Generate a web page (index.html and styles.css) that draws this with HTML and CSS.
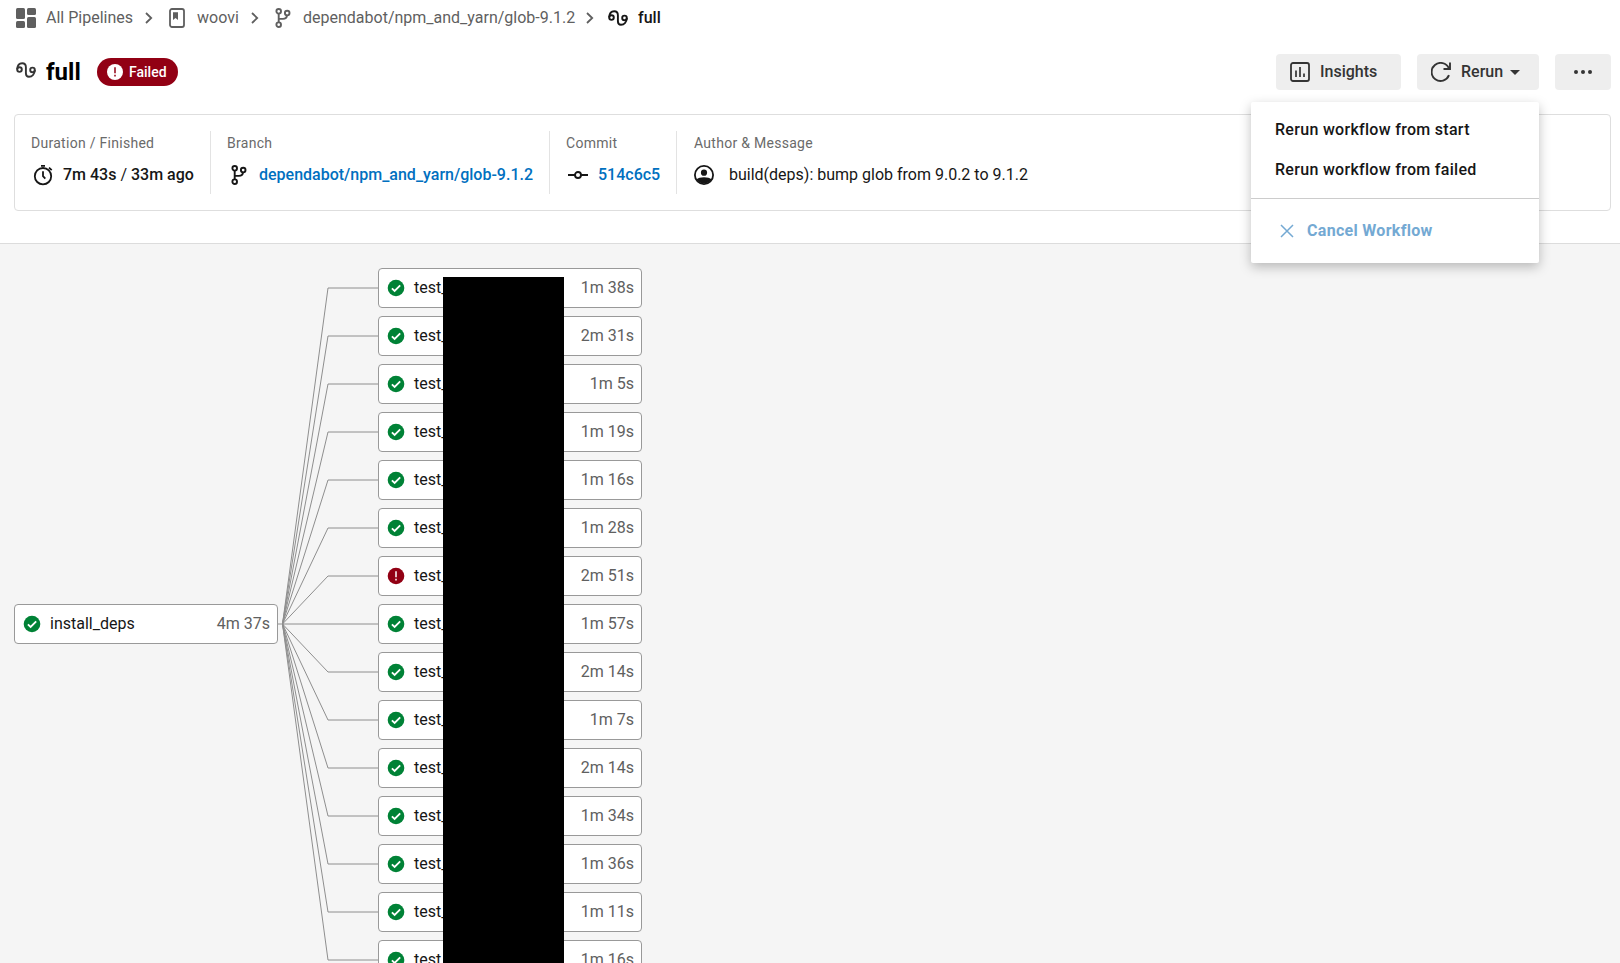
FILE: index.html
```html
<!DOCTYPE html>
<html lang="en">
<head>
<meta charset="utf-8">
<title>full - Pipelines</title>
<link rel="stylesheet" href="styles.css">
</head>
<body>
<svg class="defs" aria-hidden="true">
  <defs>
    <symbol id="chevron" viewBox="0 0 8 12"><path d="M1 1 6.2 6 1 11" fill="none" stroke="currentColor" stroke-width="1.8"/></symbol>
    <symbol id="branch" viewBox="0 0 16 20"><g fill="none" stroke="currentColor" stroke-width="1.9"><circle cx="3.7" cy="3.3" r="2.3"/><circle cx="12.2" cy="5.1" r="2.3"/><circle cx="3.7" cy="16.7" r="2.3"/><path d="M3.7 5.6V14.4M12 7.4Q11.6 10.9 8 10.9H3.7"/></g></symbol>
    <symbol id="workflow" viewBox="0 0 20 16"><g fill="none" stroke="currentColor" stroke-width="1.9"><circle cx="3.5" cy="7.6" r="2.3"/><circle cx="16.5" cy="7.9" r="2.3"/><path d="M1.2 7.4C1.4 3.6 3.4 1.3 6.2 1.3C8.6 1.3 9.9 2.8 9.9 5.2V11.2C9.9 13.4 11 14.7 13 14.7C16.3 14.7 18.6 12 18.8 8"/></g></symbol>
    <symbol id="ok" viewBox="0 0 18 18"><circle cx="9" cy="9" r="8.3" fill="#008236"/><path d="M4.9 9.3 7.6 12 13.2 6.3" fill="none" stroke="#fff" stroke-width="1.8"/></symbol>
    <symbol id="bad" viewBox="0 0 18 18"><circle cx="9" cy="9" r="8.3" fill="#920014"/><path d="M9 4.3V10.2M9 11.8V13.5" fill="none" stroke="#fff" stroke-width="1.5"/></symbol>
  </defs>
</svg>

<nav class="crumbs">
  <a class="crumb crumb-all">
    <svg class="i20" viewBox="0 0 20 20"><g fill="currentColor"><rect width="9" height="11" rx="1.5"/><rect x="11" width="9" height="7" rx="1.5"/><rect y="13" width="9" height="7" rx="1.5"/><rect x="11" y="9" width="9" height="11" rx="1.5"/></g></svg>
    <span>All Pipelines</span>
  </a>
  <svg class="chev"><use href="#chevron"/></svg>
  <a class="crumb crumb-project">
    <svg class="book" viewBox="0 0 16 20"><rect x="1" y="1" width="14" height="18" rx="2" fill="none" stroke="currentColor" stroke-width="1.8"/><path d="M4 4.2H9V12L6.5 10 4 12Z" fill="currentColor"/></svg>
    <span>woovi</span>
  </a>
  <svg class="chev"><use href="#chevron"/></svg>
  <a class="crumb crumb-branch">
    <svg class="branch"><use href="#branch"/></svg>
    <span>dependabot/npm_and_yarn/glob-9.1.2</span>
  </a>
  <svg class="chev"><use href="#chevron"/></svg>
  <span class="crumb crumb-current">
    <svg class="flow"><use href="#workflow"/></svg>
    <span>full</span>
  </span>
</nav>

<header class="head">
  <svg class="flow"><use href="#workflow"/></svg>
  <h1>full</h1>
  <span class="badge">
    <svg viewBox="0 0 16 16"><circle cx="8" cy="8" r="8" fill="#fff"/><path d="M8 3.3V9.2M8 10.8V12.5" stroke="#920014" stroke-width="1.5"/></svg>
    <span>Failed</span>
  </span>
  <div class="actions">
    <button class="btn btn-insights">
      <svg class="i20" viewBox="0 0 20 20"><rect x="1" y="1" width="18" height="18" rx="2" fill="none" stroke="currentColor" stroke-width="1.8"/><path d="M6 8.5V15M10 5V15M14 11.5V15" fill="none" stroke="currentColor" stroke-width="1.7"/></svg>
      <span>Insights</span>
    </button>
    <div class="rerun">
      <button class="btn btn-rerun">
        <svg class="i20" viewBox="0 0 20 20"><path d="M18 13.2A9 9 0 1 1 17.8 6.2M19 .5V7H12.5" fill="none" stroke="currentColor" stroke-width="1.9"/></svg>
        <span>Rerun</span>
        <svg class="caret" viewBox="0 0 10 5"><path d="M0 0H10L5 5Z" fill="currentColor"/></svg>
      </button>
      <div class="menu">
        <div class="menu-item">Rerun workflow from start</div>
        <div class="menu-item">Rerun workflow from failed</div>
        <div class="menu-cancel">
          <svg viewBox="0 0 14 14"><path d="M1 1 13 13M13 1 1 13" stroke="currentColor" stroke-width="1.5"/></svg>
          <span>Cancel Workflow</span>
        </div>
      </div>
    </div>
    <button class="btn btn-more" aria-label="More">
      <svg viewBox="0 0 18 4"><g fill="currentColor"><circle cx="2" cy="2" r="2"/><circle cx="9" cy="2" r="2"/><circle cx="16" cy="2" r="2"/></g></svg>
    </button>
  </div>
</header>

<section class="info">
  <div class="field field-duration">
    <div class="label">Duration / Finished</div>
    <div class="value">
      <svg class="watch" viewBox="0 0 20 22"><g fill="none" stroke="currentColor" stroke-width="1.8"><circle cx="10" cy="12.2" r="8.2"/><path d="M8 1.9H12M16 3.6 18.7 6.2M10 7.2V12.2L12.3 14.6"/></g></svg>
      <span><b>7m 43s</b> / <b>33m ago</b></span>
    </div>
  </div>
  <div class="field field-branch">
    <div class="label">Branch</div>
    <div class="value">
      <svg class="branch"><use href="#branch"/></svg>
      <a>dependabot/npm_and_yarn/glob-9.1.2</a>
    </div>
  </div>
  <div class="field field-commit">
    <div class="label">Commit</div>
    <div class="value">
      <svg class="commit" viewBox="0 0 20 8"><g fill="none" stroke="currentColor" stroke-width="1.9"><circle cx="10" cy="4" r="3"/><path d="M0 4H7M13 4H20"/></g></svg>
      <a>514c6c5</a>
    </div>
  </div>
  <div class="field field-author">
    <div class="label">Author &amp; Message</div>
    <div class="value">
      <svg class="i20" viewBox="0 0 20 20"><circle cx="10" cy="10" r="9.1" fill="none" stroke="currentColor" stroke-width="1.8"/><circle cx="10" cy="7.7" r="3.1" fill="currentColor"/><path d="M2.5 14.6C5 11.6 15 11.6 17.5 14.6A9.2 9.2 0 0 1 2.5 14.6Z" fill="currentColor"/></svg>
      <span>build(deps): bump glob from 9.0.2 to 9.1.2</span>
    </div>
  </div>
</section>

<main class="canvas">
  <div class="stage first">
    <div class="job"><svg><use href="#ok"/></svg><span>install_deps</span><time>4m 37s</time></div>
  </div>
  <svg class="edges" viewBox="0 0 100 720">
    <path d="M0 356H4.5M4.5 356 50 20H100M4.5 356 50 68H100M4.5 356 50 116H100M4.5 356 50 164H100M4.5 356 50 212H100M4.5 356 50 260H100M4.5 356 50 308H100M4.5 356H100M4.5 356 50 404H100M4.5 356 50 452H100M4.5 356 50 500H100M4.5 356 50 548H100M4.5 356 50 596H100M4.5 356 50 644H100M4.5 356 50 692H100"/>
  </svg>
  <div class="stage tests">
    <div class="job"><svg><use href="#ok"/></svg><span>test_</span><time>1m 38s</time></div>
    <div class="job"><svg><use href="#ok"/></svg><span>test_</span><time>2m 31s</time></div>
    <div class="job"><svg><use href="#ok"/></svg><span>test_</span><time>1m 5s</time></div>
    <div class="job"><svg><use href="#ok"/></svg><span>test_</span><time>1m 19s</time></div>
    <div class="job"><svg><use href="#ok"/></svg><span>test_</span><time>1m 16s</time></div>
    <div class="job"><svg><use href="#ok"/></svg><span>test_</span><time>1m 28s</time></div>
    <div class="job"><svg><use href="#bad"/></svg><span>test_</span><time>2m 51s</time></div>
    <div class="job"><svg><use href="#ok"/></svg><span>test_</span><time>1m 57s</time></div>
    <div class="job"><svg><use href="#ok"/></svg><span>test_</span><time>2m 14s</time></div>
    <div class="job"><svg><use href="#ok"/></svg><span>test_</span><time>1m 7s</time></div>
    <div class="job"><svg><use href="#ok"/></svg><span>test_</span><time>2m 14s</time></div>
    <div class="job"><svg><use href="#ok"/></svg><span>test_</span><time>1m 34s</time></div>
    <div class="job"><svg><use href="#ok"/></svg><span>test_</span><time>1m 36s</time></div>
    <div class="job"><svg><use href="#ok"/></svg><span>test_</span><time>1m 11s</time></div>
    <div class="job"><svg><use href="#ok"/></svg><span>test_</span><time>1m 16s</time></div>
    <div class="redaction"></div>
  </div>
</main>
</body>
</html>
```

FILE: styles.css
```css
* { box-sizing: border-box; }
body {
  margin: 0;
  height: 963px;
  overflow: hidden;
  display: flex;
  flex-direction: column;
  background: #fff;
  color: #161616;
  font: 16px/20px Roboto, "Liberation Sans", sans-serif;
}
svg { display: block; flex: none; }
span, a, time { white-space: nowrap; }
.defs { position: absolute; width: 0; height: 0; }
.i20 { width: 20px; height: 20px; }
.branch, .book { width: 16px; height: 20px; }
.flow { width: 20px; height: 16px; }

.crumbs {
  display: flex;
  align-items: center;
  height: 36px;
  padding-left: 16px;
  color: #5f5f5f;
}
.crumb { display: flex; align-items: center; }
.crumb-all { width: 129px; gap: 10px; }
.crumb-project { width: 82px; gap: 12px; }
.crumb-branch { width: 311px; gap: 12px; }
.crumb-current { gap: 10px; color: #161616; font-weight: 500; }
.chev { width: 8px; height: 12px; margin-right: 16px; }
.chev:nth-of-type(3) { margin-right: 14px; }

.head {
  display: flex;
  align-items: center;
  height: 78px;
  padding: 0 9px 6px 16px;
}
.head > .flow { color: #343434; margin-top: -4px; }
h1 {
  width: 51px;
  margin: 0 0 0 10px;
  color: #000;
  font-size: 24px;
  font-weight: 700;
  line-height: 28px;
  white-space: nowrap;
}
.badge {
  display: flex;
  align-items: center;
  gap: 6px;
  width: 81px;
  height: 28px;
  padding-left: 10px;
  border-radius: 14px;
  background: #920014;
  color: #fff;
  font-size: 14px;
  font-weight: 500;
}
.badge svg { width: 16px; height: 16px; }
.actions { display: flex; gap: 16px; margin-left: auto; }
.btn {
  display: flex;
  align-items: center;
  height: 36px;
  padding: 0 0 0 14px;
  border: 0;
  border-radius: 4px;
  background: #eee;
  color: #343434;
  font: inherit;
  font-weight: 500;
}
.btn-insights { width: 125px; gap: 10px; }
.btn-rerun { width: 122px; gap: 10px; }
.btn-rerun .caret { width: 10px; height: 5px; margin-left: -3px; }
.btn-more { width: 56px; padding: 0; justify-content: center; }
.btn-more svg { width: 18px; height: 4px; }
.rerun { position: relative; }
.menu {
  position: absolute;
  z-index: 5;
  top: 48px;
  right: 0;
  width: 288px;
  height: 161px;
  padding-top: 8px;
  border-radius: 2px;
  background: #fff;
  box-shadow: 0 4px 12px rgba(0, 0, 0, .25);
  font-weight: 500;
  letter-spacing: .3px;
}
.menu-item { height: 40px; padding-left: 24px; line-height: 40px; }
.menu-cancel {
  display: flex;
  align-items: center;
  gap: 13px;
  height: 65px;
  margin-top: 8px;
  padding-left: 29px;
  border-top: 1px solid #ccc;
  color: #74a9d3;
  font-weight: 700;
}
.menu-cancel svg { width: 14px; height: 14px; }

.info {
  display: flex;
  height: 97px;
  margin: 0 9px 32px 14px;
  padding: 16px 0;
  border: 1px solid #dedede;
  border-radius: 4px;
}
.field { height: 63px; padding: 2px 0 0 16px; border-right: 1px solid #e3e3e3; }
.field-duration { width: 196px; }
.field-branch { width: 339px; }
.field-commit { width: 127px; }
.field-author { flex: 1; padding-left: 17px; border-right: 0; }
.label { color: #6a6a6a; font-size: 14px; letter-spacing: .28px; }
.value { display: flex; align-items: center; height: 22px; margin-top: 11px; }
.value b { font-weight: 500; }
.value a { color: #0070c0; font-weight: 500; }
.watch { width: 20px; height: 22px; margin: 0 10px 0 2px; }
.value .branch { margin: 0 12px 0 4px; }
.commit { width: 20px; height: 8px; margin: 0 10px 0 2px; }
.value .i20 { margin: 0 15px 0 0; }

.canvas {
  display: flex;
  flex: 1;
  min-height: 0;
  overflow: hidden;
  padding: 24px 0 0 14px;
  border-top: 1px solid #dcdcdc;
  background: #f5f5f5;
}
.stage { display: flex; flex-direction: column; flex: none; gap: 8px; width: 264px; }
.first { padding-top: 336px; }
.tests { position: relative; }
.edges { width: 100px; height: 720px; }
.edges path { fill: none; stroke: #8e8e8e; stroke-width: 1; }
.job {
  display: flex;
  align-items: center;
  flex: none;
  height: 40px;
  padding: 0 7px 0 8px;
  border: 1px solid #999;
  border-radius: 4px;
  background: #fff;
}
.job svg { width: 18px; height: 18px; margin-right: 9px; }
.job time { margin-left: auto; color: #606060; }
.redaction { position: absolute; left: 65px; top: 9px; width: 121px; height: 720px; background: #000; }
```
